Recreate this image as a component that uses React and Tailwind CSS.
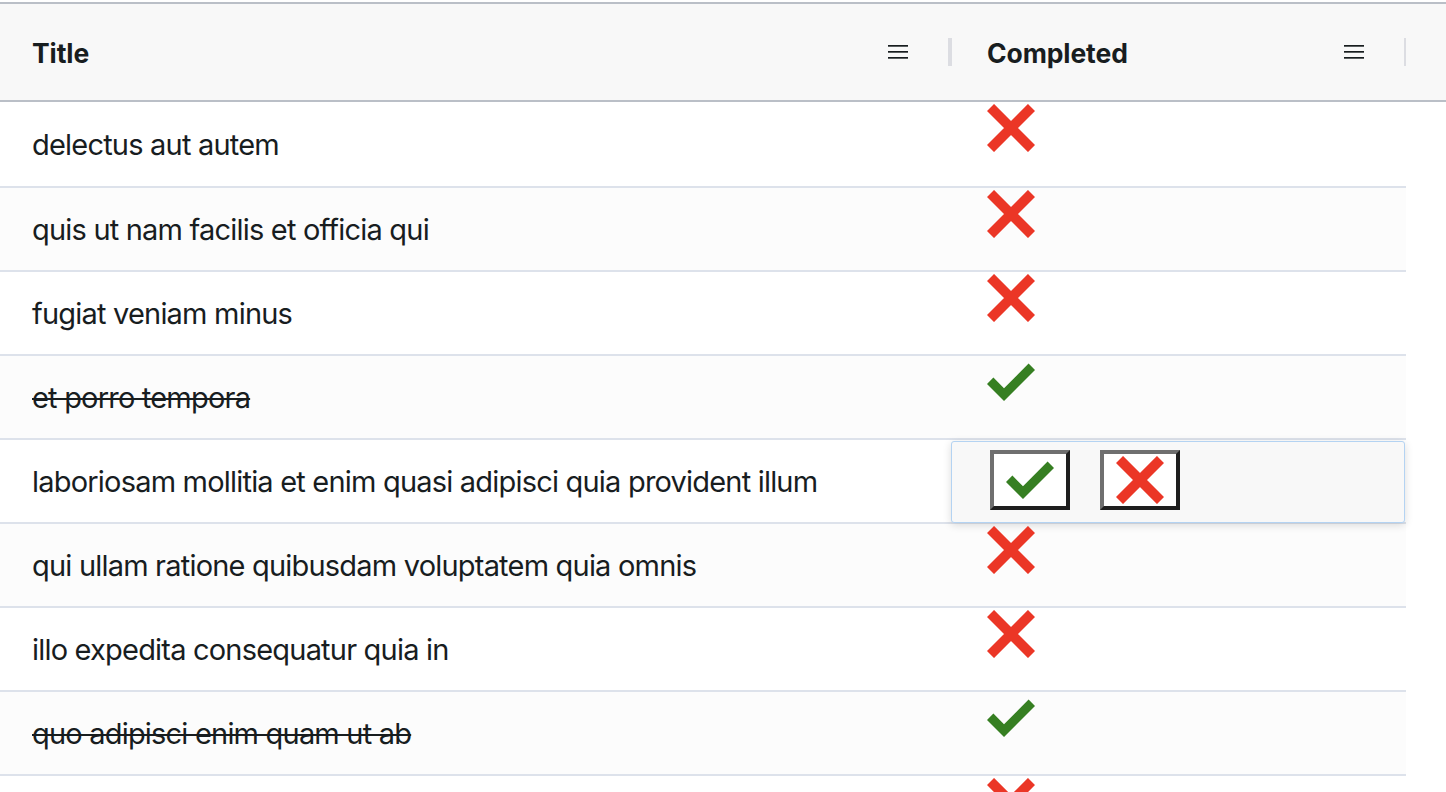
import React from "react";

const rows = [
  { title: "delectus aut autem", done: false },
  { title: "quis ut nam facilis et officia qui", done: false },
  { title: "fugiat veniam minus", done: false },
  { title: "et porro tempora", done: true },
  { title: "laboriosam mollitia et enim quasi adipisci quia provident illum", done: false, editing: true },
  { title: "qui ullam ratione quibusdam voluptatem quia omnis", done: false },
  { title: "illo expedita consequatur quia in", done: false },
  { title: "quo adipisci enim quam ut ab", done: true },
  { title: "", done: false },
];

function Cross() {
  return (
    <svg width="48" height="48" viewBox="0 0 48 48" className="block shrink-0">
      <path d="M3.5 3.5 L44.5 44.5 M44.5 3.5 L3.5 44.5" stroke="#eb3626" strokeWidth="10" strokeLinecap="butt" fill="none" />
    </svg>
  );
}

function Check({ box = true }) {
  return (
    <svg width="48" height={box ? 48 : 38} viewBox={box ? "0 -5 48 48" : "0 0 48 38"} className="block shrink-0">
      <polygon points="0,21 17,38 48,7 41.6,0.6 17,25.2 6.4,14.6" fill="#367f22" />
    </svg>
  );
}

function MenuIcon() {
  return (
    <svg width="20" height="14" viewBox="0 0 20 14" className="block shrink-0">
      <rect x="0" y="0" width="20" height="1.7" fill="#181d1f" />
      <rect x="0" y="6" width="20" height="1.7" fill="#181d1f" />
      <rect x="0" y="12" width="20" height="1.7" fill="#181d1f" />
    </svg>
  );
}

function Editor() {
  return (
    <div className="mt-[1px] ml-[1px] h-[82px] w-[454px] rounded-[3px] border border-[#b4d3f2] bg-[#f8f8f8] shadow-[0_2px_8px_rgba(0,0,0,0.14)] flex items-start pl-[38px] pt-[8px] gap-[30px]">
      <div className="w-[80px] h-[60px] border-4 border-t-[#6f6f6f] border-l-[#6f6f6f] border-b-[#1e1e1e] border-r-[#1e1e1e] bg-white flex items-center justify-center">
        <Check box={false} />
      </div>
      <div className="w-[80px] h-[60px] border-4 border-t-[#6f6f6f] border-l-[#6f6f6f] border-b-[#1e1e1e] border-r-[#1e1e1e] bg-white flex items-center justify-center">
        <Cross />
      </div>
    </div>
  );
}

export default function App() {
  return (
    <div className="w-[1446px] h-[792px] overflow-hidden bg-white pt-[2px] text-[#181d1f] font-['Inter',sans-serif]">
      <div className="h-[100px] border-t-2 border-b-2 border-[#babfc7] bg-[#f8f8f8] flex">
        <div className="w-[1406px] flex overflow-hidden">
          <div className="w-[948px] shrink-0 flex items-center pl-[32px] pr-[40px]">
            <span className="flex-1 pt-[3px] text-[26.5px] font-bold tracking-[-0.1px]">Title</span>
            <MenuIcon />
          </div>
          <div className="w-[4px] h-[28px] self-center shrink-0 bg-[#dcdde2]" />
          <div className="w-[452px] shrink-0 flex items-center pl-[35px] pr-[40px]">
            <span className="flex-1 pt-[3px] text-[26.5px] font-bold tracking-[-0.1px]">Completed</span>
            <MenuIcon />
          </div>
          <div className="w-[4px] h-[28px] self-center shrink-0 bg-[#dcdde2]" />
        </div>
      </div>
      <div className="w-[1406px]">
        {rows.map((r, i) => (
          <div
            key={i}
            className={
              "flex border-b-2 border-[#dde2eb] " +
              (i === 0 ? "h-[86px] " : "h-[84px] ") +
              (i % 2 === 1 ? "bg-[#fcfcfc]" : "bg-white")
            }
          >
            <div className="w-[950px] shrink-0 flex items-center pl-[32px] pt-[2px] text-[29px] tracking-[-0.8px]">
              <span className={r.done ? "line-through decoration-[2px]" : ""}>{r.title}</span>
            </div>
            <div className="w-[456px] shrink-0 flex items-start">
              {r.editing ? (
                <Editor />
              ) : (
                <div className="pl-[37px] pt-[2px]">{r.done ? <Check /> : <Cross />}</div>
              )}
            </div>
          </div>
        ))}
      </div>
    </div>
  );
}
